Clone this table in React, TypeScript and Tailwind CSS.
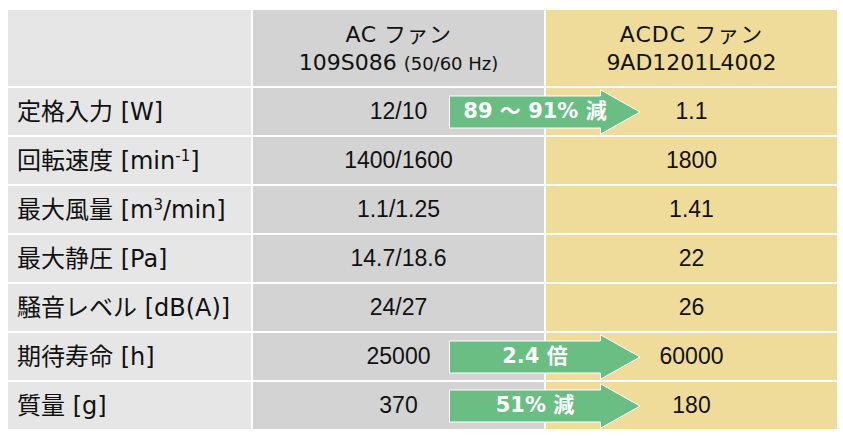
import React from 'react'

const labelFont = { fontFamily: '"DejaVu Sans", "Noto Sans CJK JP", sans-serif' }
const valueFont = { fontFamily: '"Liberation Sans", "Noto Sans CJK JP", sans-serif' }

type Row = {
    label: React.ReactNode
    ac: string
    acdc: string
    arrow?: string
}

const rows: Row[] = [
    { label: <>定格入力 [W]</>, ac: '12/10', acdc: '1.1', arrow: '89 ～ 91% 減' },
    { label: <>回転速度 [min<sup className="text-[15px]">-1</sup>]</>, ac: '1400/1600', acdc: '1800' },
    { label: <>最大風量 [m<sup className="text-[15px]">3</sup>/min]</>, ac: '1.1/1.25', acdc: '1.41' },
    { label: <>最大静圧 [Pa]</>, ac: '14.7/18.6', acdc: '22' },
    { label: <>騒音レベル [dB(A)]</>, ac: '24/27', acdc: '26' },
    { label: <>期待寿命 [h]</>, ac: '25000', acdc: '60000', arrow: '2.4 倍' },
    { label: <>質量 [g]</>, ac: '370', acdc: '180', arrow: '51% 減' },
]

function Arrow({ text }: { text: string }) {
    return (
        <div className="absolute left-[441px] top-1/2 -translate-y-1/2 w-[192px] h-[46px]">
            <svg width="192" height="46" viewBox="0 0 192 46" className="absolute inset-0">
                <polygon
                    points="0.5,7 151.5,7 151.5,0.8 191,23 151.5,45.2 151.5,39 0.5,39"
                    fill="#6abe84"
                    stroke="#ffffff"
                    strokeWidth="1"
                />
            </svg>
            <div
                className="absolute top-0 h-full left-[86px] -translate-x-1/2 flex items-center whitespace-nowrap text-white font-bold text-[21px]"
                style={labelFont}
            >
                {text}
            </div>
        </div>
    )
}

export default function App() {
    return (
        <div className="w-[843px] h-[436px] bg-white pt-[10px] pl-[8px] text-[#111]">
            <div className="flex flex-col gap-[2px] w-[829px]">
                <div className="grid grid-cols-[243px_291px_291px] gap-x-[2px] h-[76px]">
                    <div className="bg-[#e6e6e6]"></div>
                    <div className="bg-[#d3d3d3] flex flex-col items-center justify-center leading-[28px] pt-[2px]" style={labelFont}>
                        <div className="text-[22px] tracking-[0.5px]">AC ファン</div>
                        <div className="text-[22px]">
                            109S086 <span className="text-[18px]">(50/60 Hz)</span>
                        </div>
                    </div>
                    <div className="bg-[#efdc9a] flex flex-col items-center justify-center leading-[28px] pt-[2px]" style={labelFont}>
                        <div className="text-[22px] tracking-[1px]">ACDC ファン</div>
                        <div className="text-[22px]">9AD1201L4002</div>
                    </div>
                </div>

                {rows.map((r, i) => (
                    <div key={i} className="relative grid grid-cols-[243px_291px_291px] gap-x-[2px] h-[47px]">
                        <div className="bg-[#e6e6e6] flex items-center pl-[9px] text-[24px] whitespace-nowrap" style={labelFont}>
                            <span>{r.label}</span>
                        </div>
                        <div className="bg-[#d3d3d3] flex items-center justify-center text-[23px]" style={valueFont}>
                            {r.ac}
                        </div>
                        <div className="bg-[#efdc9a] flex items-center justify-center text-[23px]" style={valueFont}>
                            {r.acdc}
                        </div>
                        {r.arrow && <Arrow text={r.arrow} />}
                    </div>
                ))}
            </div>
        </div>
    )
}
